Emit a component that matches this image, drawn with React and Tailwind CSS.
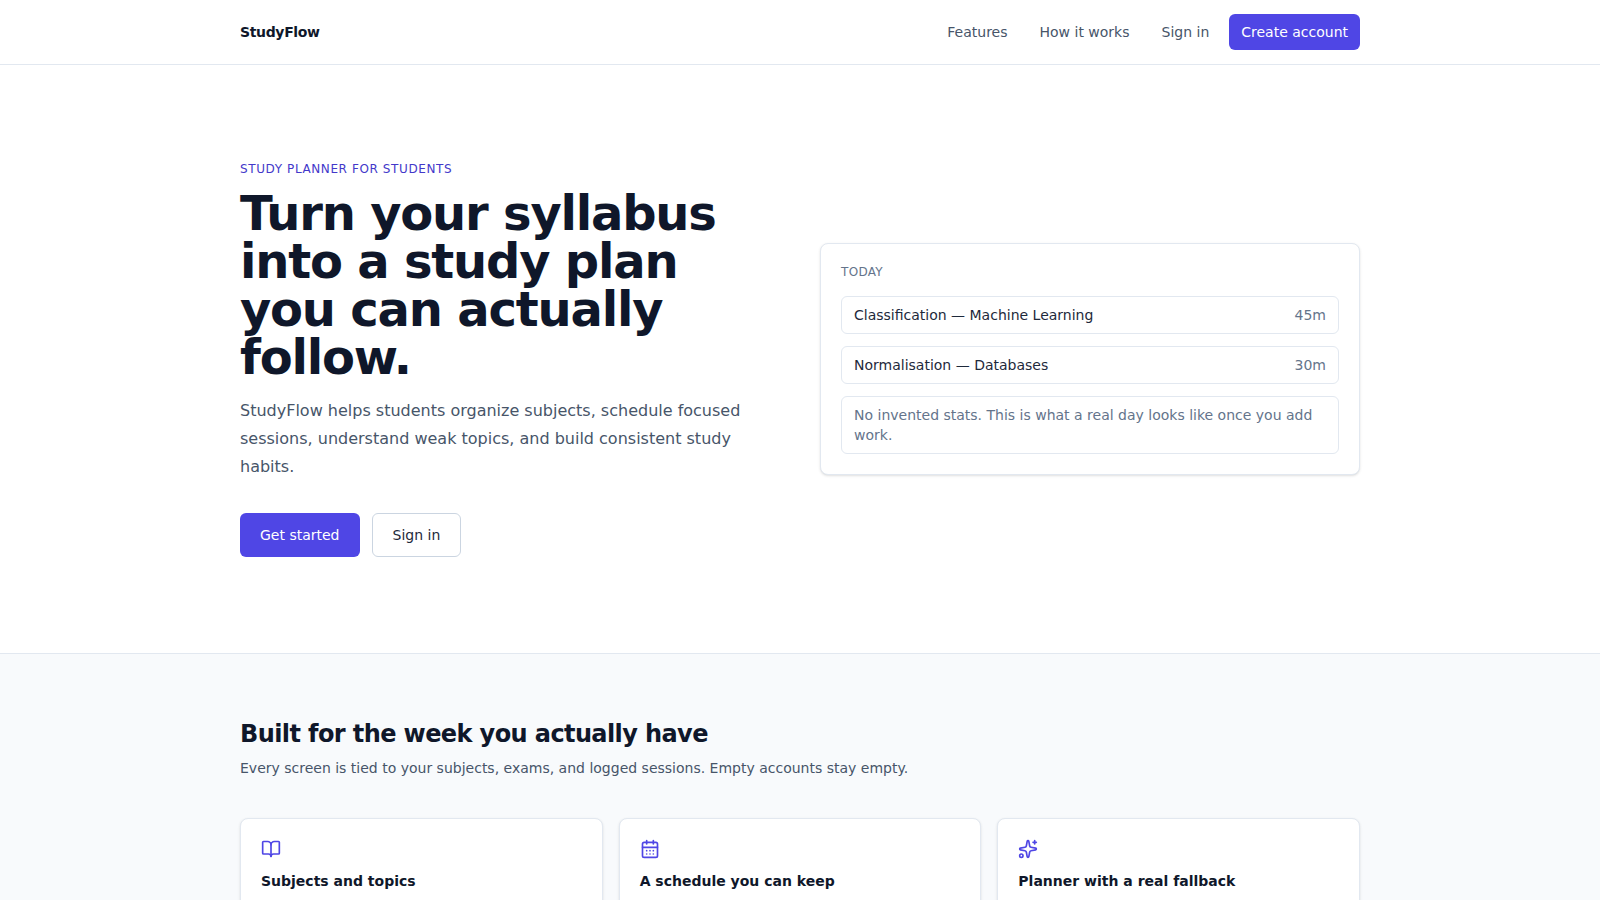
import { BookOpen, CalendarDays, Sparkles } from 'lucide-react';

const sessions = [
  { title: 'Classification — Machine Learning', time: '45m' },
  { title: 'Normalisation — Databases', time: '30m' },
];

const features = [
  { icon: BookOpen, title: 'Subjects and topics' },
  { icon: CalendarDays, title: 'A schedule you can keep' },
  { icon: Sparkles, title: 'Planner with a real fallback' },
];

export default function App() {
  return (
    <div className="h-screen overflow-hidden bg-white font-['DejaVu_Sans',sans-serif] text-[#0f172a] antialiased">
      {/* Header */}
      <header className="border-b border-[#e2e8f0] bg-white">
        <div className="mx-auto flex h-16 max-w-6xl items-center justify-between px-4">
          <span className="text-sm font-bold tracking-tight">StudyFlow</span>
          <nav className="flex items-center gap-2 text-sm">
            <a className="px-3 py-2 text-[#475569]">Features</a>
            <a className="px-3 py-2 text-[#475569]">How it works</a>
            <a className="px-3 py-2 text-[#475569]">Sign in</a>
            <a className="rounded-md bg-[#4f46e5] px-3 py-2 text-white">Create account</a>
          </nav>
        </div>
      </header>

      {/* Hero */}
      <section className="mx-auto grid max-w-6xl grid-cols-2 items-center gap-10 px-4 py-24">
        <div>
          <p className="text-xs uppercase tracking-wider text-[#4338ca]">Study planner for students</p>
          <h1 className="mt-3 text-5xl leading-none font-bold tracking-tight">
            Turn your syllabus into a study plan you can actually follow.
          </h1>
          <p className="mt-4 text-base leading-7 text-[#475569]">
            StudyFlow helps students organize subjects, schedule focused sessions, understand weak topics, and build
            consistent study habits.
          </p>
          <div className="mt-8 flex items-center gap-3 text-sm">
            <a className="rounded-md bg-[#4f46e5] px-5 py-3 text-white">Get started</a>
            <a className="rounded-md border border-[#cbd5e1] px-5 py-[11px] text-[#1e293b]">Sign in</a>
          </div>
        </div>

        <div className="rounded-lg border border-[#e2e8f0] bg-white p-5 shadow-sm">
          <p className="text-xs uppercase tracking-wide text-[#64748b]">Today</p>
          <div className="mt-4 flex flex-col gap-3 text-sm">
            {sessions.map((s) => (
              <div key={s.title} className="flex items-center justify-between rounded-md border border-[#e2e8f0] px-3 py-2">
                <span className="text-[#1e293b]">{s.title}</span>
                <span className="text-[#64748b]">{s.time}</span>
              </div>
            ))}
            <div className="rounded-md border border-[#e2e8f0] px-3 py-2 text-[#64748b]">
              No invented stats. This is what a real day looks like once you add work.
            </div>
          </div>
        </div>
      </section>

      {/* Features */}
      <section className="border-t border-[#e2e8f0] bg-[#f8fafc]">
        <div className="mx-auto max-w-6xl px-4 py-16">
          <h2 className="text-2xl font-bold tracking-tight">Built for the week you actually have</h2>
          <p className="mt-2 text-sm text-[#475569]">
            Every screen is tied to your subjects, exams, and logged sessions. Empty accounts stay empty.
          </p>
          <div className="mt-10 grid grid-cols-3 gap-4">
            {features.map(({ icon: Icon, title }) => (
              <div key={title} className="min-h-40 rounded-lg border border-[#e2e8f0] bg-white p-5 shadow-sm">
                <Icon className="h-5 w-5 text-[#4f46e5]" />
                <h3 className="mt-3 text-sm font-bold">{title}</h3>
              </div>
            ))}
          </div>
        </div>
      </section>
    </div>
  );
}
